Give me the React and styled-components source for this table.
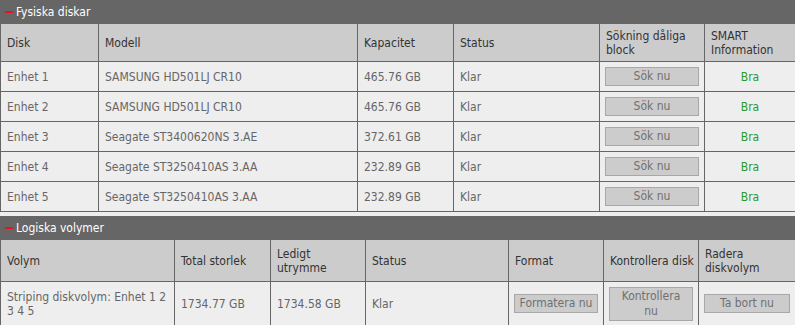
import React from 'react'
import styled, { createGlobalStyle } from 'styled-components'

const GlobalStyle = createGlobalStyle`
    body {
        margin: 0;
        background: #eeeeee;
        font-family: "DejaVu Sans Condensed", "DejaVu Sans", sans-serif;
        font-size: 12px;
    }
`

const Page = styled.div`
    width: 795px;
    display: flex;
    flex-direction: column;
    gap: 4px;
`

const SectionBar = styled.div`
    height: 23px;
    background: #666666;
    color: #ffffff;
    display: flex;
    align-items: center;
    padding-left: 5px;
    gap: 3px;
`

const Dash = styled.span`
    width: 8px;
    height: 2px;
    background: #e8141c;
`

const Table = styled.table`
    width: 795px;
    border-collapse: collapse;
    table-layout: fixed;
`

const Row = styled.tr`
    height: ${(p) => p.h}px;
`

const Th = styled.th`
    background: #cccccc;
    color: #333333;
    font-weight: normal;
    text-align: left;
    vertical-align: middle;
    padding: 0 6px;
    line-height: 14px;
    border: 1px solid #666666;
    white-space: nowrap;
`

const Td = styled.td`
    background: #eeeeee;
    color: ${(p) => (p.ok ? '#2a9a2a' : '#666666')};
    text-align: ${(p) => (p.center ? 'center' : 'left')};
    vertical-align: middle;
    padding: 0 ${(p) => (p.btn ? 5 : 6)}px;
    line-height: 14px;
    border: 1px solid #666666;
`

const Button = styled.div`
    background: #cccccc;
    border: 1px solid #a8a8a8;
    color: #707070;
    text-align: center;
    line-height: 15px;
    padding: 1px 0;
    white-space: nowrap;
`

const disks = [
    ['Enhet 1', 'SAMSUNG HD501LJ CR10', '465.76 GB'],
    ['Enhet 2', 'SAMSUNG HD501LJ CR10', '465.76 GB'],
    ['Enhet 3', 'Seagate ST3400620NS 3.AE', '372.61 GB'],
    ['Enhet 4', 'Seagate ST3250410AS 3.AA', '232.89 GB'],
    ['Enhet 5', 'Seagate ST3250410AS 3.AA', '232.89 GB'],
]

export default function App() {
    return (
        <Page>
            <GlobalStyle />
            <div>
                <SectionBar><Dash />Fysiska diskar</SectionBar>
                <Table>
                    <colgroup>
                        <col style={{ width: 98 }} />
                        <col style={{ width: 259 }} />
                        <col style={{ width: 96 }} />
                        <col style={{ width: 146 }} />
                        <col style={{ width: 105 }} />
                        <col style={{ width: 91 }} />
                    </colgroup>
                    <tbody>
                        <Row h={38}>
                            <Th>Disk</Th>
                            <Th>Modell</Th>
                            <Th>Kapacitet</Th>
                            <Th>Status</Th>
                            <Th>Sökning dåliga<br />block</Th>
                            <Th>SMART<br />Information</Th>
                        </Row>
                        {disks.map((d) => (
                            <Row h={30} key={d[0]}>
                                <Td>{d[0]}</Td>
                                <Td>{d[1]}</Td>
                                <Td>{d[2]}</Td>
                                <Td>Klar</Td>
                                <Td btn><Button>Sök nu</Button></Td>
                                <Td center ok>Bra</Td>
                            </Row>
                        ))}
                    </tbody>
                </Table>
            </div>
            <div>
                <SectionBar><Dash />Logiska volymer</SectionBar>
                <Table>
                    <colgroup>
                        <col style={{ width: 174 }} />
                        <col style={{ width: 96 }} />
                        <col style={{ width: 95 }} />
                        <col style={{ width: 143 }} />
                        <col style={{ width: 95 }} />
                        <col style={{ width: 95 }} />
                        <col style={{ width: 97 }} />
                    </colgroup>
                    <tbody>
                        <Row h={42}>
                            <Th>Volym</Th>
                            <Th>Total storlek</Th>
                            <Th>Ledigt<br />utrymme</Th>
                            <Th>Status</Th>
                            <Th>Format</Th>
                            <Th>Kontrollera disk</Th>
                            <Th>Radera<br />diskvolym</Th>
                        </Row>
                        <Row h={44}>
                            <Td>Striping diskvolym: Enhet 1 2<br />3 4 5</Td>
                            <Td>1734.77 GB</Td>
                            <Td>1734.58 GB</Td>
                            <Td>Klar</Td>
                            <Td btn><Button>Formatera nu</Button></Td>
                            <Td btn><Button>Kontrollera<br />nu</Button></Td>
                            <Td btn><Button>Ta bort nu</Button></Td>
                        </Row>
                    </tbody>
                </Table>
            </div>
        </Page>
    )
}
